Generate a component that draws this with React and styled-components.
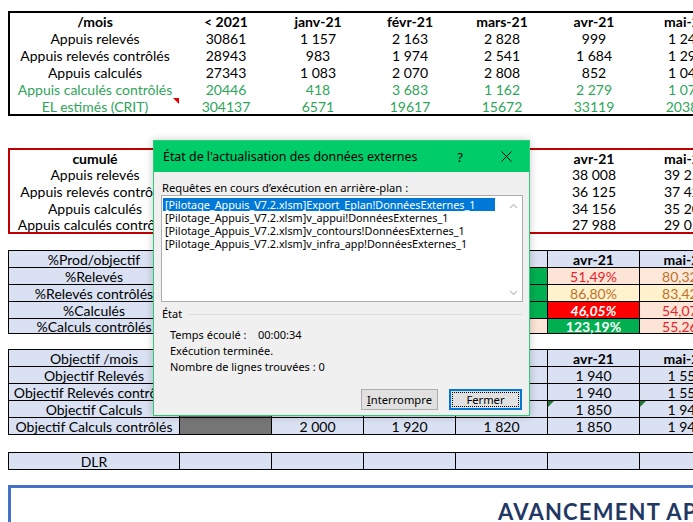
import React from "react";
import styled, { createGlobalStyle } from "styled-components";

const GlobalStyle = createGlobalStyle`
  html, body { margin: 0; padding: 0; background: #ffffff; }
  body { overflow: hidden; }
`;

const Page = styled.div`
  position: relative;
  width: 693px;
  height: 522px;
  overflow: hidden;
  background: #fff;
  font-family: Lato, "Liberation Sans", sans-serif;
  font-size: 14px;
  color: #000;
  display: flex;
  flex-direction: column;
  align-items: flex-start;
  padding-top: 11px;
  box-sizing: border-box;
`;

const FramedTable = styled.div`
  flex: none;
  display: grid;
  grid-template-columns: 170px repeat(6, 92px);
  grid-template-rows: ${(p) => p.$rows};
  margin: ${(p) => p.$top}px 0 0 8px;
  border: 2px solid ${(p) => p.$frame};
`;

const Cell = styled.div`
  position: relative;
  display: flex;
  align-items: center;
  justify-content: center;
  white-space: nowrap;
  font-weight: ${(p) => (p.$bold ? 700 : 400)};
  color: ${(p) => p.$tone || "#000"};
`;

const LinedTable = styled.div`
  flex: none;
  display: grid;
  grid-template-columns: 171px repeat(6, 92px);
  grid-template-rows: ${(p) => p.$rows};
  margin: ${(p) => p.$top}px 0 0 8px;
  border-top: 1px solid #000;
  border-left: 1px solid #000;
`;

const Box = styled.div`
  position: relative;
  box-sizing: border-box;
  border-right: 1px solid #000;
  border-bottom: 1px solid #000;
  background: ${(p) => p.$bg || "#d9e1f2"};
  color: ${(p) => p.$tone || "#000"};
  font-weight: ${(p) => (p.$bold ? 700 : 400)};
  font-style: ${(p) => (p.$italic ? "italic" : "normal")};
  display: flex;
  align-items: center;
  justify-content: center;
  white-space: nowrap;
`;

const CommentFlag = styled.span`
  position: absolute;
  top: 0;
  right: 1px;
  width: 0;
  height: 0;
  border-top: 6px solid #e00000;
  border-left: 6px solid transparent;
`;

const ErrorFlag = styled.span`
  position: absolute;
  top: 0;
  left: 0;
  width: 0;
  height: 0;
  border-top: 6px solid #1e7b34;
  border-right: 6px solid transparent;
`;

const Banner = styled.div`
  flex: none;
  margin: 15px 0 0 8px;
  width: 900px;
  height: 80px;
  box-sizing: border-box;
  border: 3px solid #4472c4;
  padding: 12px 0 0 487px;
`;

const BannerTitle = styled.div`
  font-family: Lato, "Liberation Sans", sans-serif;
  font-weight: 700;
  font-size: 22px;
  line-height: 24px;
  letter-spacing: 1.2px;
  color: #1f3864;
  white-space: nowrap;
`;

/* ---------- dialog ---------- */
const Dialog = styled.div`
  position: absolute;
  left: 153px;
  top: 140px;
  width: 377px;
  height: 276px;
  box-sizing: border-box;
  border: 1px solid #2ecc7a;
  background: #f0f0f0;
  box-shadow: 0 0 8px rgba(0, 0, 0, 0.22);
  font-family: "Noto Sans", "Open Sans", sans-serif;
  font-size: 11px;
  color: #000;
  display: flex;
  flex-direction: column;
`;

const TitleBar = styled.div`
  flex: none;
  height: 31px;
  background: #00cc6a;
  display: flex;
  align-items: center;
  padding-left: 9px;
`;

const TitleText = styled.span`
  flex: 1;
  font-size: 12.4px;
`;

const TitleButton = styled.span`
  width: 46px;
  height: 31px;
  display: flex;
  align-items: center;
  justify-content: center;
  font-size: 13px;
`;

const Body = styled.div`
  flex: 1;
  display: flex;
  flex-direction: column;
  padding: 8px 7px 0 7px;
`;

const Caption = styled.div`
  line-height: 15px;
  padding-left: 1px;
  font-size: 11.2px;
`;

const ListBox = styled.div`
  width: 362px;
  height: 107px;
  box-sizing: border-box;
  border: 1px solid #adadad;
  background: #fff;
  display: flex;
`;

const ListItems = styled.div`
  flex: 1;
  padding: 2px 0 0 1px;
`;

const ListItem = styled.div`
  width: 330px;
  height: 13px;
  line-height: 13px;
  font-size: 10.8px;
  padding-left: 2px;
  white-space: nowrap;
  background: ${(p) => (p.$selected ? "#0078d7" : "transparent")};
  color: ${(p) => (p.$selected ? "#fff" : "#000")};
`;

const ScrollBar = styled.div`
  width: 17px;
  display: flex;
  flex-direction: column;
  justify-content: space-between;
  align-items: center;
  padding: 7px 0 5px;
`;

const GroupHead = styled.div`
  margin-top: 5px;
  display: flex;
  align-items: center;
  gap: 6px;
  line-height: 14px;
  padding-left: 1px;
`;

const GroupLine = styled.div`
  flex: 1;
  height: 1px;
  background: #dcdcdc;
`;

const Info = styled.div`
  margin-top: 6px;
  padding-left: 9px;
  line-height: 16px;
`;

const InfoLabel = styled.span`
  display: inline-block;
  width: 88px;
`;

const ButtonRow = styled.div`
  margin-top: 14px;
  display: flex;
  justify-content: flex-end;
  gap: 11px;
`;

const Button = styled.div`
  position: relative;
  width: ${(p) => p.$w}px;
  height: 21px;
  box-sizing: border-box;
  background: #e1e1e1;
  border: ${(p) => (p.$default ? "2px solid #0078d7" : "1px solid #adadad")};
  display: flex;
  align-items: center;
  justify-content: center;
  font-size: 11.2px;
  &::after {
    content: "";
    display: ${(p) => (p.$default ? "block" : "none")};
    position: absolute;
    inset: 1px;
    border: 1px dotted #000;
  }
`;

const Underline = styled.span`
  text-decoration: underline;
`;

const Chevron = ({ up }) => (
  <svg width="9" height="6" viewBox="0 0 9 6">
    <path
      d={up ? "M1 5 L4.5 1.5 L8 5" : "M1 1 L4.5 4.5 L8 1"}
      fill="none"
      stroke="#c2c2c2"
      strokeWidth="1.2"
    />
  </svg>
);

const CloseIcon = () => (
  <svg width="11" height="11" viewBox="0 0 11 11">
    <path d="M0.5 0.5 L10.5 10.5 M10.5 0.5 L0.5 10.5" stroke="#000" strokeWidth="1" />
  </svg>
);

/* ---------- data ---------- */
const months = ["< 2021", "janv-21", "févr-21", "mars-21", "avr-21", "mai-21"];
const GREEN = "#2ea55a";

const monthly = [
  { label: "Appuis relevés", v: ["30861", "1 157", "2 163", "2 828", "999", "1 247"] },
  { label: "Appuis relevés contrôlés", v: ["28943", "983", "1 974", "2 541", "1 684", "1 295"] },
  { label: "Appuis calculés", v: ["27343", "1 083", "2 070", "2 808", "852", "1 045"] },
  { label: "Appuis calculés contrôlés", v: ["20446", "418", "3 683", "1 162", "2 279", "1 071"], tone: GREEN },
  { label: "EL estimés (CRIT)", v: ["304137", "6571", "19617", "15672", "33119", "20385"], tone: GREEN, comment: true },
];

/* columns < 2021 .. mars-21 sit under the dialog */
const cumulHead = ["", "", "", "", "avr-21", "mai-21"];
const cumul = [
  { label: "Appuis relevés", v: ["", "", "", "", "38 008", "39 255"] },
  { label: "Appuis relevés contrôlés", v: ["", "", "", "", "36 125", "37 420"] },
  { label: "Appuis calculés", v: ["", "", "", "", "34 156", "35 201"] },
  { label: "Appuis calculés contrôlés", v: ["", "", "", "", "27 988", "29 059"] },
];

const good = { bg: "#00b050", tone: "#fff", bold: true };
const bad = { bg: "#fce4d6", tone: "#e8232b" };
const neutral = { bg: "#fff2cc", tone: "#c0702a" };
const peach = { bg: "#fde9d9", tone: "#c0702a" };
const alarm = { bg: "#ff0000", tone: "#fff", bold: true, italic: true };
const E = { t: "" };

const percent = [
  { label: "%Relevés", c: [E, E, E, { t: "", ...good }, { t: "51,49%", ...bad }, { t: "80,32%", ...peach }] },
  { label: "%Relevés contrôlés", c: [E, E, E, { t: "", ...good }, { t: "86,80%", ...neutral }, { t: "83,42%", ...neutral }] },
  { label: "%Calculés", c: [E, E, E, { t: "", ...good }, { t: "46,05%", ...alarm }, { t: "54,07%", ...bad }] },
  { label: "%Calculs contrôlés", c: [E, E, E, { t: "", ...bad }, { t: "123,19%", ...good }, { t: "55,26%", ...bad }] },
];

const GREY = { t: "", bg: "#767676" };
const objectives = [
  { label: "Objectif Relevés", c: [GREY, E, E, E, { t: "1 940" }, { t: "1 550" }] },
  { label: "Objectif Relevés contrôlés", c: [GREY, E, E, E, { t: "1 940" }, { t: "1 550" }] },
  { label: "Objectif Calculs", c: [GREY, E, E, E, { t: "1 850", flag: true }, { t: "1 940", flag: true }] },
  { label: "Objectif Calculs contrôlés", c: [GREY, { t: "2 000" }, { t: "1 920" }, { t: "1 820" }, { t: "1 850" }, { t: "1 940" }] },
];

const hiddenHead = ["", "", "", "", "avr-21", "mai-21"];

const queries = [
  "[Pilotage_Appuis_V7.2.xlsm]Export_Eplan!DonnéesExternes_1",
  "[Pilotage_Appuis_V7.2.xlsm]v_appui!DonnéesExternes_1",
  "[Pilotage_Appuis_V7.2.xlsm]v_contours!DonnéesExternes_1",
  "[Pilotage_Appuis_V7.2.xlsm]v_infra_app!DonnéesExternes_1",
];

const LinedRows = ({ rows }) =>
  rows.map((r) => (
    <React.Fragment key={r.label}>
      <Box>{r.label}</Box>
      {r.c.map((c, i) => (
        <Box key={i} $bg={c.bg} $tone={c.tone} $bold={c.bold} $italic={c.italic}>
          {c.flag && <ErrorFlag />}
          {c.t}
        </Box>
      ))}
    </React.Fragment>
  ));

export default function App() {
  return (
    <>
      <GlobalStyle />
      <Page>
        <FramedTable $frame="#000" $top={0} $rows="repeat(5, 17px) 16px">
          <Cell $bold>/mois</Cell>
          {months.map((m) => (
            <Cell key={m} $bold>{m}</Cell>
          ))}
          {monthly.map((r) => (
            <React.Fragment key={r.label}>
              <Cell $tone={r.tone}>
                {r.label}
                {r.comment && <CommentFlag />}
              </Cell>
              {r.v.map((v, i) => (
                <Cell key={i} $tone={r.tone}>{v}</Cell>
              ))}
            </React.Fragment>
          ))}
        </FramedTable>

        <FramedTable $frame="#c00000" $top={32} $rows="16px 17px 17px 17px 15px">
          <Cell $bold>cumulé</Cell>
          {cumulHead.map((m, i) => (
            <Cell key={i} $bold>{m}</Cell>
          ))}
          {cumul.map((r) => (
            <React.Fragment key={r.label}>
              <Cell>{r.label}</Cell>
              {r.v.map((v, i) => (
                <Cell key={i}>{v}</Cell>
              ))}
            </React.Fragment>
          ))}
        </FramedTable>

        <LinedTable $top={16} $rows="17px 17px 17px 17px 15px">
          <Box>%Prod/objectif</Box>
          {hiddenHead.map((m, i) => (
            <Box key={i} $bold>{m}</Box>
          ))}
          <LinedRows rows={percent} />
        </LinedTable>

        <LinedTable $top={15} $rows="repeat(5, 17px)">
          <Box>Objectif /mois</Box>
          {hiddenHead.map((m, i) => (
            <Box key={i} $bold>{m}</Box>
          ))}
          <LinedRows rows={objectives} />
        </LinedTable>

        <LinedTable $top={17} $rows="17px">
          <Box>DLR</Box>
          {months.map((m) => (
            <Box key={m} />
          ))}
        </LinedTable>

        <Banner>
          <BannerTitle>AVANCEMENT APPUIS</BannerTitle>
        </Banner>

        <Dialog>
          <TitleBar>
            <TitleText>État de l'actualisation des données externes</TitleText>
            <TitleButton>?</TitleButton>
            <TitleButton>
              <CloseIcon />
            </TitleButton>
          </TitleBar>
          <Body>
            <Caption>Requêtes en cours d’exécution en arrière-plan :</Caption>
            <ListBox>
              <ListItems>
                {queries.map((q, i) => (
                  <ListItem key={q} $selected={i === 0}>{q}</ListItem>
                ))}
              </ListItems>
              <ScrollBar>
                <Chevron up />
                <Chevron />
              </ScrollBar>
            </ListBox>
            <GroupHead>
              <span>État</span>
              <GroupLine />
            </GroupHead>
            <Info>
              <div>
                <InfoLabel>Temps écoulé :</InfoLabel>00:00:34
              </div>
              <div>Exécution terminée.</div>
              <div>Nombre de lignes trouvées : 0</div>
            </Info>
            <ButtonRow>
              <Button $w={77}>
                <span>
                  <Underline>I</Underline>nterrompre
                </span>
              </Button>
              <Button $w={73} $default>
                Fermer
              </Button>
            </ButtonRow>
          </Body>
        </Dialog>
      </Page>
    </>
  );
}
